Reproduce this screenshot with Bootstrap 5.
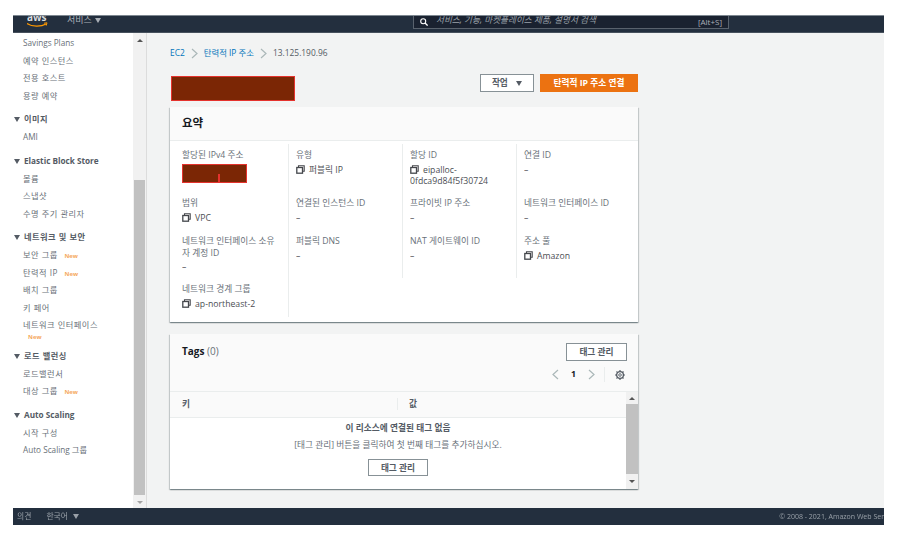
<!DOCTYPE html>
<html lang="ko">
<head>
  <meta charset="UTF-8">
  <title>탄력적 IP 주소</title>
  <meta name="viewport" content="width=device-width, initial-scale=1">
  <link href="https://cdn.jsdelivr.net/npm/bootstrap@5.3.0/dist/css/bootstrap.min.css" rel="stylesheet">
  <style>
    body {
      background-color: #fff;
      font-family: "Open Sans", "Noto Sans CJK KR", sans-serif;
      font-size: 8.7px;
      line-height: 11.5px;
      color: #545b64;
    }
    .frame {
      width: 871px;
      height: 510px;
      margin: 15px 0 0 13px;
      overflow: hidden;
      filter: blur(0.45px);
    }
    .topbar {
      height: 18px;
      background-color: #232f3e;
      border-top: 1px solid #7d8790;
      border-bottom: 1px solid #47515d;
      color: #aab0b7;
      overflow: hidden;
    }
    .aws-logo {
      width: 54px;
      padding-left: 14px;
      height: 16px;
      flex: none;
    }
    .service-menu {
      width: 346px;
      flex: none;
      font-size: 9px;
      line-height: 16px;
      margin-top: -4px;
    }
    .service-menu .caret-down { margin-left: 1px; }
    .search-box {
      width: 316px;
      height: 14px;
      margin-top: -1px;
      background-color: #1a2230;
      border: 1px solid #59626d;
      border-top: 0;
      padding: 0 6px 0 6px;
      font-size: 8px;
      line-height: 11px;
    }
    .search-hint { font-style: italic; color: #9aa1a9; font-size: 8.6px; padding-bottom: 2px; }
    .side-nav {
      width: 120px;
      flex: none;
      padding-top: 1px;
      color: #687078;
      font-size: 8.2px;
      background-color: #fff;
      overflow: hidden;
    }
    .side-item {
      height: 17.5px;
      line-height: 17.5px;
      padding-left: 10px;
      white-space: nowrap;
    }
    .side-item.ko { letter-spacing: .5px; }
    .side-head {
      height: 18px;
      line-height: 18px;
      margin-top: 6px;
      padding-left: 1px;
      font-weight: 700;
      color: #545b64;
    }
    .caret-down {
      display: inline-block;
      border-left: 3px solid transparent;
      border-right: 3px solid transparent;
      border-top: 5px solid currentColor;
      vertical-align: 0;
    }
    .side-head .caret-down { margin-right: 4px; }
    .new-tag {
      color: #f5a860;
      font-size: 6px;
      font-weight: 700;
      margin-left: 4px;
      letter-spacing: 0;
    }
    .new-line {
      height: 7px;
      line-height: 7px;
      padding-left: 15px;
    }
    .new-line .new-tag { margin-left: 0; display: block; }
    .side-track {
      width: 14px;
      flex: none;
      background-color: #f1f1f1;
      border-right: 1px solid #dcdcdc;
    }
    .arrow-up, .arrow-down {
      width: 0;
      height: 0;
      margin: 6px auto 0;
      border-left: 3px solid transparent;
      border-right: 3px solid transparent;
    }
    .arrow-up { border-bottom: 3px solid #555; }
    .arrow-down { border-top: 3px solid #555; }
    .track-gap { height: 138px; }
    .track-thumb {
      height: 315px;
      margin: 0 1px;
      background-color: #c1c1c1;
    }
    .track-foot { color: #a3a3a3; }
    .track-foot .arrow-down { border-top-color: #a3a3a3; }
    .main-area {
      background-color: #f2f3f3;
      padding: 14px 0 0 23px;
      overflow: hidden;
    }
    .crumbs {
      height: 12px;
      line-height: 12px;
      gap: 6px;
      font-size: 8.4px;
    }
    .crumbs a { color: #0073bb; text-decoration: none; }
    .crumb-sep { width: 7px; height: 11px; flex: none; }
    .head-row {
      width: 468px;
      height: 33px;
      margin-top: 15px;
    }
    .redact {
      background-color: #7b2605;
      border: 1px solid #e5322d;
    }
    .redact-title { width: 124px; height: 25px; margin-top: 2px; margin-left: 1px; }
    .redact-ip { width: 65px; height: 19px; position: relative; margin-top: 2px; }
    .redact-ip span {
      position: absolute;
      left: 35px;
      bottom: 0;
      width: 2px;
      height: 8px;
      background-color: #e5322d;
    }
    .btn-aws {
      height: 18px;
      padding: 0;
      font-size: 8.7px;
      line-height: 15px;
      font-weight: 700;
      border-radius: 0;
      color: #545b64;
      background-color: #fff;
      border: 1px solid #879196;
    }
    .btn-action { width: 54px; }
    .btn-action .caret-down { margin-left: 6px; }
    .btn-orange {
      width: 98px;
      background-color: #ec7211;
      border-color: #ec7211;
      color: #fff;
    }
    .head-btns { gap: 6px; }
    .panel {
      width: 468px;
      border: 0;
      border-radius: 0;
      background-color: #fff;
      box-shadow: 0 1px 1px 0 rgba(0, 28, 36, .3), 1px 1px 1px 0 rgba(0, 28, 36, .15), -1px 1px 1px 0 rgba(0, 28, 36, .15);
    }
    .panel-head {
      height: 34px;
      line-height: 32px;
      padding-left: 12px;
      background-color: #fafafa;
      border-bottom: 1px solid #eaeded;
      font-size: 11.5px;
      font-weight: 700;
      color: #16191f;
    }
    .summary-grid {
      display: grid;
      grid-template-columns: 119px 114px 114px 121px;
      grid-template-rows: 48px 38px 48px 39px;
      padding-top: 3px;
      height: 181px;
    }
    .cell {
      padding: 6px 8px 0 7px;
      border-right: 1px solid #eaeded;
    }
    .cell:nth-child(4n+1) { padding-left: 12px; padding-right: 12px; }
    .cell-last { border-right: 0; }
    .cell-label { color: #687078; word-break: break-all; }
    .cell-value {
      margin-top: 3px;
      color: #16191f;
      opacity: .8;
    }
    .copy-icon { width: 9px; height: 9px; margin-right: 4px; vertical-align: -1px; }
    .tags-panel { height: 155px; margin-top: 12px; }
    .tags-top {
      height: 58px;
      background-color: #fafafa;
      border-bottom: 1px solid #eaeded;
      padding: 9px 11px 0 12px;
    }
    .tags-title { font-size: 10px; line-height: 16px; font-weight: 700; color: #16191f; }
    .tags-title em { font-style: normal; font-weight: 400; color: #687078; }
    .btn-tags { width: 61px; }
    .pager {
      height: 15px;
      margin: 6px 2px 0 0;
      font-weight: 700;
      color: #16191f;
    }
    .pager-num { margin: 0 12px 0 12px; }
    .pager-sep { width: 1px; height: 15px; background-color: #eaeded; margin: 0 10px 0 9px; }
    .tags-body { min-height: 0; }
    .table-side { min-width: 0; }
    .table-head {
      height: 26px;
      line-height: 25px;
      background-color: #fafafa;
      border-bottom: 1px solid #eaeded;
      font-weight: 700;
      color: #545b64;
    }
    .col-key { width: 228px; padding-left: 12px; position: relative; }
    .col-val { padding-left: 11px; }
    .col-key::after {
      content: "";
      position: absolute;
      right: 0;
      top: 6px;
      height: 12px;
      width: 1px;
      background-color: #eaeded;
    }
    .empty-title { margin-top: 4px; line-height: 12px; font-weight: 700; color: #545b64; }
    .empty-text { margin-top: 5px; line-height: 12px; color: #687078; }
    .btn-empty { width: 60px; margin-top: 8px; height: 17px; line-height: 14px; }
    .tags-track {
      width: 12px;
      flex: none;
      background-color: #f1f1f1;
    }
    .tags-track .track-thumb { height: 70px; margin: 4px 0 0 0; }
    .tags-track .arrow-up { margin-top: 5px; }
    .tags-track .arrow-down { margin-top: 6px; }
    .footbar {
      height: 17px;
      background-color: #232f3e;
      color: #99a0a8;
      font-size: 7.8px;
      line-height: 17px;
      padding-left: 4px;
      white-space: nowrap;
      overflow: hidden;
    }
    .foot-lang { margin-left: 13px; }
    .foot-lang .caret-down { margin-left: 3px; }
    .foot-copy { font-size: 7px; margin-right: -31px; }
    .frame-body { height: 475px; }
  </style>
</head>
<body>

  <div class="frame">

    <!-- Top bar -->
    <div class="topbar d-flex">
      <div class="aws-logo">
        <svg width="24" height="16" viewBox="0 0 24 16">
          <text x="0" y="5" font-family="Open Sans" font-size="10" font-weight="700" fill="#d7dadd">aws</text>
          <path d="M0 7.5c5 3.5 14 3.5 19 .5" fill="none" stroke="#ff9900" stroke-width="1.3"/>
          <path d="M17 7.2l3-.4-.8 2.8" fill="none" stroke="#ff9900" stroke-width="1"/>
        </svg>
      </div>
      <div class="service-menu">서비스 <span class="caret-down"></span></div>
      <div class="search-box d-flex align-items-center">
        <svg width="8" height="8" viewBox="0 0 8 8" class="me-2 flex-none">
          <circle cx="3.2" cy="3.2" r="2.5" fill="none" stroke="#fff" stroke-width="1.1"/>
          <path d="M5 5l2.6 2.6" stroke="#fff" stroke-width="1.3"/>
        </svg>
        <span class="search-hint flex-grow-1">서비스, 기능, 마켓플레이스 제품, 설명서 검색</span>
        <span>[Alt+S]</span>
      </div>
    </div>

    <div class="frame-body d-flex">

      <!-- Side navigation -->
      <div class="side-nav">
        <div class="side-item">Savings Plans</div>
        <div class="side-item ko">예약 인스턴스</div>
        <div class="side-item ko">전용 호스트</div>
        <div class="side-item ko">용량 예약</div>
        <div class="side-item side-head ko"><span class="caret-down"></span>이미지</div>
        <div class="side-item">AMI</div>
        <div class="side-item side-head"><span class="caret-down"></span>Elastic Block Store</div>
        <div class="side-item ko">볼륨</div>
        <div class="side-item ko">스냅샷</div>
        <div class="side-item ko">수명 주기 관리자</div>
        <div class="side-item side-head ko"><span class="caret-down"></span>네트워크 및 보안</div>
        <div class="side-item ko">보안 그룹 <span class="new-tag">New</span></div>
        <div class="side-item ko">탄력적 IP <span class="new-tag">New</span></div>
        <div class="side-item ko">배치 그룹</div>
        <div class="side-item ko">키 페어</div>
        <div class="side-item ko">네트워크 인터페이스</div>
        <div class="new-line"><span class="new-tag">New</span></div>
        <div class="side-item side-head ko load-head"><span class="caret-down"></span>로드 밸런싱</div>
        <div class="side-item ko">로드밸런서</div>
        <div class="side-item ko">대상 그룹 <span class="new-tag">New</span></div>
        <div class="side-item side-head auto-head"><span class="caret-down"></span>Auto Scaling</div>
        <div class="side-item ko">시작 구성</div>
        <div class="side-item">Auto Scaling 그룹</div>
      </div>
      <div class="side-track">
        <div class="arrow-up"></div>
        <div class="track-gap"></div>
        <div class="track-thumb"></div>
        <div class="track-foot"><div class="arrow-down"></div></div>
      </div>

      <!-- Main -->
      <div class="main-area flex-grow-1">
        <div class="crumbs d-flex align-items-center">
          <a href="#">EC2</a>
          <svg class="crumb-sep" viewBox="0 0 7 11"><path d="M1 1l5 4.5-5 4.5" fill="none" stroke="#aab7b8" stroke-width="1.2"/></svg>
          <a href="#">탄력적 IP 주소</a>
          <svg class="crumb-sep" viewBox="0 0 7 11"><path d="M1 1l5 4.5-5 4.5" fill="none" stroke="#aab7b8" stroke-width="1.2"/></svg>
          <span>13.125.190.96</span>
        </div>

        <div class="head-row d-flex justify-content-between">
          <div class="redact redact-title"></div>
          <div class="head-btns d-flex">
            <button class="btn btn-aws btn-action">작업 <span class="caret-down"></span></button>
            <button class="btn btn-aws btn-orange">탄력적 IP 주소 연결</button>
          </div>
        </div>

        <!-- Summary -->
        <div class="card panel">
          <div class="panel-head">요약</div>
          <div class="summary-grid">
            <div class="cell">
              <div class="cell-label">할당된 IPv4 주소</div>
              <div class="redact redact-ip"><span></span></div>
            </div>
            <div class="cell">
              <div class="cell-label">유형</div>
              <div class="cell-value"><svg class="copy-icon" viewBox="0 0 9 9"><use href="#copy"/></svg>퍼블릭 IP</div>
            </div>
            <div class="cell">
              <div class="cell-label">할당 ID</div>
              <div class="cell-value"><svg class="copy-icon" viewBox="0 0 9 9"><use href="#copy"/></svg>eipalloc-<br>0fdca9d84f5f30724</div>
            </div>
            <div class="cell cell-last">
              <div class="cell-label">연결 ID</div>
              <div class="cell-value">–</div>
            </div>

            <div class="cell">
              <div class="cell-label">범위</div>
              <div class="cell-value"><svg class="copy-icon" viewBox="0 0 9 9"><use href="#copy"/></svg>VPC</div>
            </div>
            <div class="cell">
              <div class="cell-label">연결된 인스턴스 ID</div>
              <div class="cell-value">–</div>
            </div>
            <div class="cell">
              <div class="cell-label">프라이빗 IP 주소</div>
              <div class="cell-value">–</div>
            </div>
            <div class="cell cell-last">
              <div class="cell-label">네트워크 인터페이스 ID</div>
              <div class="cell-value">–</div>
            </div>

            <div class="cell">
              <div class="cell-label">네트워크 인터페이스 소유자 계정 ID</div>
              <div class="cell-value">–</div>
            </div>
            <div class="cell">
              <div class="cell-label">퍼블릭 DNS</div>
              <div class="cell-value">–</div>
            </div>
            <div class="cell">
              <div class="cell-label">NAT 게이트웨이 ID</div>
              <div class="cell-value">–</div>
            </div>
            <div class="cell cell-last">
              <div class="cell-label">주소 풀</div>
              <div class="cell-value"><svg class="copy-icon" viewBox="0 0 9 9"><use href="#copy"/></svg>Amazon</div>
            </div>

            <div class="cell">
              <div class="cell-label">네트워크 경계 그룹</div>
              <div class="cell-value"><svg class="copy-icon" viewBox="0 0 9 9"><use href="#copy"/></svg>ap-northeast-2</div>
            </div>
          </div>
        </div>

        <!-- Tags -->
        <div class="card panel tags-panel">
          <div class="tags-top">
            <div class="d-flex justify-content-between">
              <div class="tags-title">Tags <em>(0)</em></div>
              <button class="btn btn-aws btn-tags">태그 관리</button>
            </div>
            <div class="pager d-flex justify-content-end align-items-center">
              <svg width="7" height="11" viewBox="0 0 7 11"><path d="M6 1L1 5.5 6 10" fill="none" stroke="#aab7b8" stroke-width="1.2"/></svg>
              <span class="pager-num">1</span>
              <svg width="7" height="11" viewBox="0 0 7 11"><path d="M1 1l5 4.5-5 4.5" fill="none" stroke="#aab7b8" stroke-width="1.2"/></svg>
              <span class="pager-sep"></span>
              <svg width="10" height="10" viewBox="0 0 10 10">
                <circle cx="5" cy="5" r="3.4" fill="none" stroke="#545b64" stroke-width="1.3"/>
                <circle cx="5" cy="5" r="1.3" fill="none" stroke="#545b64" stroke-width=".9"/>
                <path d="M5 0v1.6M5 8.4V10M0 5h1.6M8.4 5H10M1.5 1.5l1.1 1.1M7.4 7.4l1.1 1.1M8.5 1.5L7.4 2.6M2.6 7.4L1.5 8.5" stroke="#545b64" stroke-width="1.2"/>
              </svg>
            </div>
          </div>
          <div class="tags-body d-flex flex-grow-1">
            <div class="table-side flex-grow-1 text-center">
              <div class="table-head d-flex text-start">
                <div class="col-key">키</div>
                <div class="col-val">값</div>
              </div>
              <div class="empty-title">이 리소스에 연결된 태그 없음</div>
              <div class="empty-text">[태그 관리] 버튼을 클릭하여 첫 번째 태그를 추가하십시오.</div>
              <button class="btn btn-aws btn-empty">태그 관리</button>
            </div>
            <div class="tags-track">
              <div class="arrow-up"></div>
              <div class="track-thumb"></div>
              <div class="arrow-down"></div>
            </div>
          </div>
        </div>
      </div>
    </div>

    <!-- Footer -->
    <div class="footbar d-flex justify-content-between">
      <div>의견 <span class="foot-lang">한국어 <span class="caret-down"></span></span></div>
      <div class="foot-copy">© 2008 - 2021, Amazon Web Services, Inc.</div>
    </div>
  </div>

  <svg width="0" height="0" class="position-absolute">
    <symbol id="copy" viewBox="0 0 9 9">
      <path d="M2.5 2.5V.8h5.7v5.4H6.5" fill="none" stroke="#16191f" stroke-width="1.1"/>
      <rect x=".8" y="2.5" width="5.7" height="5.7" fill="none" stroke="#16191f" stroke-width="1.3"/>
    </symbol>
  </svg>

  <script src="https://cdn.jsdelivr.net/npm/bootstrap@5.3.0/dist/js/bootstrap.bundle.min.js"></script>
</body>
</html>
